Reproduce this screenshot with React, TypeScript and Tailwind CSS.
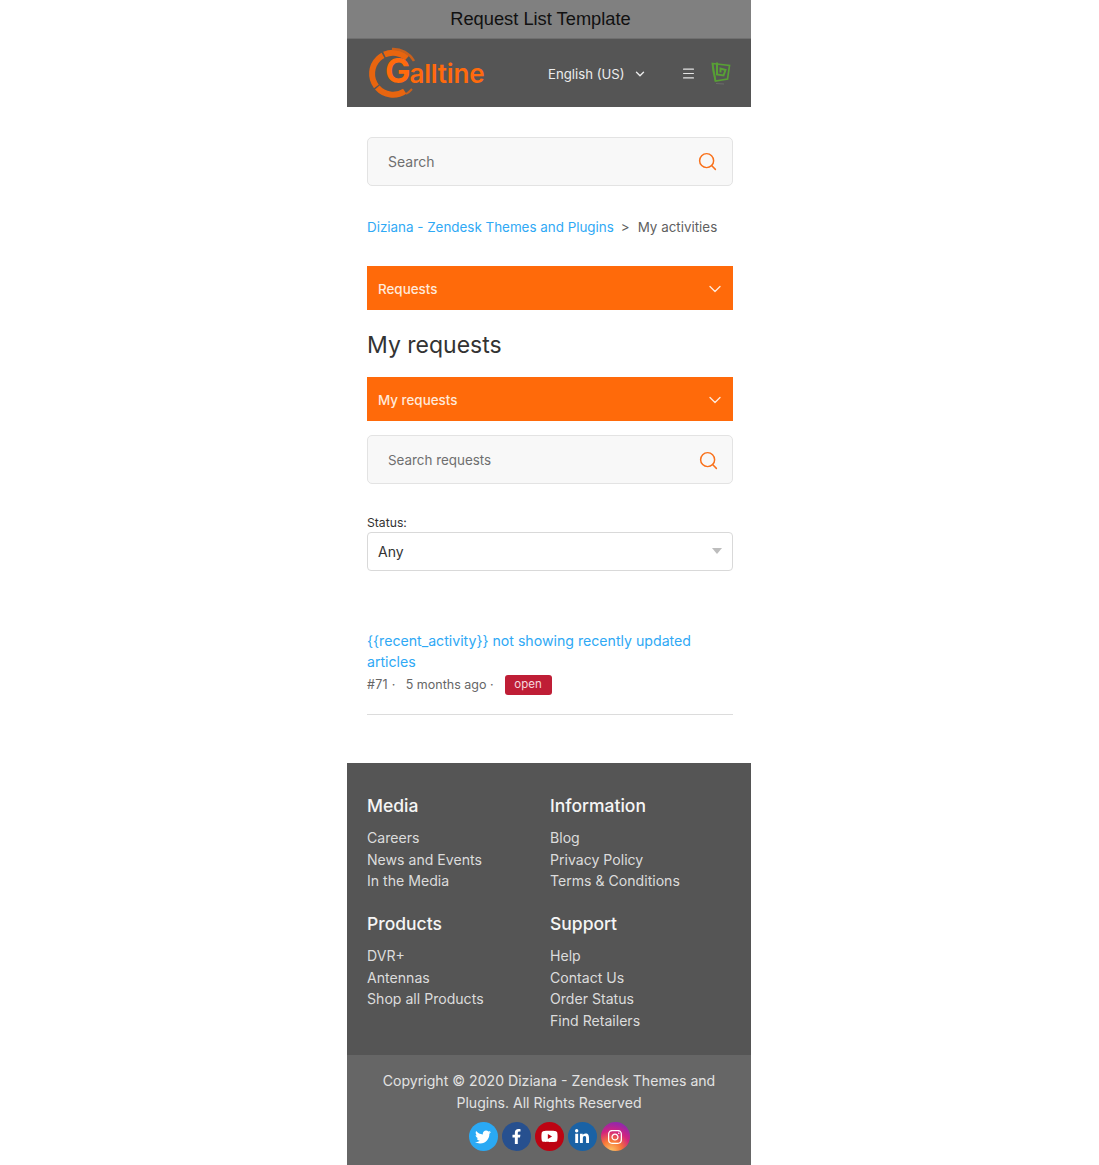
import { ChevronDown, Menu, Search } from "lucide-react";
import { FaFacebookF, FaInstagram, FaLinkedinIn, FaTwitter, FaYoutube } from "react-icons/fa";

const footerGroups = [
  { title: "Media", links: ["Careers", "News and Events", "In the Media"] },
  { title: "Information", links: ["Blog", "Privacy Policy", "Terms & Conditions"] },
  { title: "Products", links: ["DVR+", "Antennas", "Shop all Products"] },
  { title: "Support", links: ["Help", "Contact Us", "Order Status", "Find Retailers"] },
];

function Logo() {
  return (
    <div className="relative h-[52px] w-[118px] shrink-0">
      <svg viewBox="0 0 52 52" className="absolute left-0 top-0 h-[52px] w-[52px]" fill="none">
        <path d="M39 11 A21 21 0 1 0 37 44" stroke="#e8650f" strokeWidth="6" strokeDasharray="24 1.5 36 1.5 30 1.5" />
        <path d="M24 2 A24 24 0 0 1 46 14" stroke="#c9601c" strokeWidth="2.5" />
        <path d="M38 47 A24 24 0 0 0 44 42" stroke="#c9601c" strokeWidth="2" />
      </svg>
      <div className="absolute left-[17px] top-[7px] flex items-baseline font-['Inter',sans-serif] font-bold leading-none text-[#ff6a0d]">
        <span className="text-[34px] tracking-[-1px]">G</span>
        <span className="text-[26px] font-semibold tracking-[-0.2px]">alltine</span>
      </div>
    </div>
  );
}

function BrandMark() {
  return (
    <svg viewBox="0 0 20 24" className="h-[24px] w-[20px]" fill="none" stroke="#58a035" strokeWidth="1.7">
      <path d="M1.5 2.5 L18.5 4.5 L16.5 18 L4.5 20 Z" />
      <path d="M1.5 2.5 L2 9 L4.5 20" opacity="0.8" />
      <path d="M6 1.5 L6 13.5 L12.5 14.5 L14.5 9 L9.5 7.5 L9.5 11.5" strokeWidth="2" />
      <path d="M5 22.5 L13 23" stroke="#6b6b6b" strokeWidth="1" />
    </svg>
  );
}

function SearchBox({
  placeholder,
  textSize,
  iconRight,
  nudge,
}: {
  placeholder: string;
  textSize: string;
  iconRight: string;
  nudge: string;
}) {
  return (
    <div className="flex h-[49px] items-center justify-between rounded-[5px] border border-[#e3e3e3] bg-[#f8f8f8] pl-5">
      <span className={`${textSize} ${nudge} text-[#6f6f6f]`}>{placeholder}</span>
      <Search size={21} strokeWidth={1.7} className={`text-[#f9711b] ${iconRight} ${nudge}`} />
    </div>
  );
}

function OrangeBar({ label }: { label: string }) {
  return (
    <div className="flex h-[44px] items-center justify-between bg-[#ff6a0a] pl-[11px] pr-[8px] text-white">
      <span className="mt-[2px] text-[13.4px] font-medium text-[#ffe9da]">{label}</span>
      <ChevronDown size={20} strokeWidth={1.6} className="mt-[2px] text-[#ffe9da]" />
    </div>
  );
}

export default function App() {
  return (
    <div className="min-h-[1165px] bg-white font-['Inter',sans-serif]">
      <div className="ml-[347px] w-[404px]">
        <div className="flex h-[39px] items-center justify-center border-b border-[#6f6f6f] bg-[#808080] pr-[17px] font-['Liberation_Sans',sans-serif] text-[18.3px] text-[#111]">
          Request List Template
        </div>

        <header className="flex h-[68px] items-center bg-[#555555] pl-[21px] pr-[20px]">
          <Logo />
          <div className="ml-[62px] mt-[3px] flex items-center text-[13.2px] text-[#ececec]">
            English (US)
            <ChevronDown size={14} strokeWidth={2.4} className="ml-[8px]" />
          </div>
          <Menu size={15} strokeWidth={1.7} className="ml-[34px] mt-[1px] text-[#e4e4e4]" />
          <div className="ml-auto">
            <BrandMark />
          </div>
        </header>

        <main className="pl-5 pr-[18px] pt-[30px] pb-[48px]">
          <SearchBox placeholder="Search" textSize="text-[14px]" iconRight="mr-[14px]" nudge="" />

          <nav className="mt-[32px] flex h-[18px] items-center text-[13.4px] leading-[18px]">
            <a className="text-[#2fa9f5]">Diziana - Zendesk Themes and Plugins</a>
            <span className="ml-[7px] mr-[8px] text-[#5f5f5f]">&gt;</span>
            <span className="text-[#5f5f5f]">My activities</span>
          </nav>

          <div className="mt-[30px]">
            <OrangeBar label="Requests" />
          </div>

          <h1 className="mt-[20px] text-[23px] leading-[30px] font-normal text-[#333]">My requests</h1>

          <div className="mt-[17px]">
            <OrangeBar label="My requests" />
          </div>

          <div className="mt-[14px]">
            <SearchBox placeholder="Search requests" textSize="text-[13.4px]" iconRight="mr-[13px]" nudge="mt-[2px]" />
          </div>

          <label className="mt-[31px] block text-[12.2px] leading-[16px] text-[#333]">Status:</label>
          <div className="mt-[1px] flex h-[39px] items-center justify-between rounded-[4px] border border-[#d9d9d9] bg-white pl-[10px] pr-[10px]">
            <span className="text-[14px] text-[#333]">Any</span>
            <span className="-mt-0.5 h-0 w-0 border-x-[5px] border-t-[6px] border-x-transparent border-t-[#bdbdbd]" />
          </div>

          <div className="mt-[59px] border-b border-[#dcdcdc] pb-[19px]">
            <a className="block pr-[30px] text-[14.15px] leading-[21px] text-[#2fa9f5]">
              {"{{recent_activity}} not showing recently updated articles"}
            </a>
            <div className="mt-[3px] flex h-[20px] items-center text-[12.5px] text-[#666]">
              <span className="tracking-[0.3px]">#71 ·</span>
              <span className="ml-[10px]">5 months ago ·</span>
              <span className="ml-[11px] flex h-[20px] w-[47px] items-center justify-center rounded-[3px] bg-[#bf1e36] text-[11.5px] text-[#f6d9de]">
                open
              </span>
            </div>
          </div>
        </main>

        <footer>
          <div className="grid h-[292px] grid-cols-[183px_1fr] content-start bg-[#555555] pl-5 pt-[31px]">
            {footerGroups.map((group, i) => (
              <div key={group.title} className={i < 2 ? "h-[118px]" : ""}>
                <h3 className="text-[17.5px] leading-[24px] font-medium text-[#f5f5f5]">{group.title}</h3>
                <ul className="mt-[9px] text-[14.1px] leading-[21.5px] text-[#dcdcdc]">
                  {group.links.map((link) => (
                    <li key={link}>{link}</li>
                  ))}
                </ul>
              </div>
            ))}
          </div>

          <div className="h-[110px] bg-[#666666] px-5 pt-[15px] text-center text-[14.1px] leading-[21.5px] text-[#e2e2e2]">
            <p>Copyright © 2020 Diziana - Zendesk Themes and Plugins. All Rights Reserved</p>
            <div className="mt-[9px] flex justify-center gap-[4px]">
              <span className="flex h-[29px] w-[29px] items-center justify-center rounded-full bg-[#2aa9f4] text-[16px] text-white">
                <FaTwitter />
              </span>
              <span className="flex h-[29px] w-[29px] items-center justify-center rounded-full bg-[#27508f] text-[15px] text-white">
                <FaFacebookF />
              </span>
              <span className="flex h-[29px] w-[29px] items-center justify-center rounded-full bg-[#bd0312] text-[17px] text-white">
                <FaYoutube />
              </span>
              <span className="flex h-[29px] w-[29px] items-center justify-center rounded-full bg-[#1a62a5] text-[16px] text-white">
                <FaLinkedinIn />
              </span>
              <span className="flex h-[29px] w-[29px] items-center justify-center rounded-full bg-[radial-gradient(circle_at_35%_100%,#fdc468_0%,#f77737_30%,#d1237f_58%,#6a2bc9_100%)] text-[16px] text-white">
                <FaInstagram />
              </span>
            </div>
          </div>
        </footer>
      </div>
    </div>
  );
}
